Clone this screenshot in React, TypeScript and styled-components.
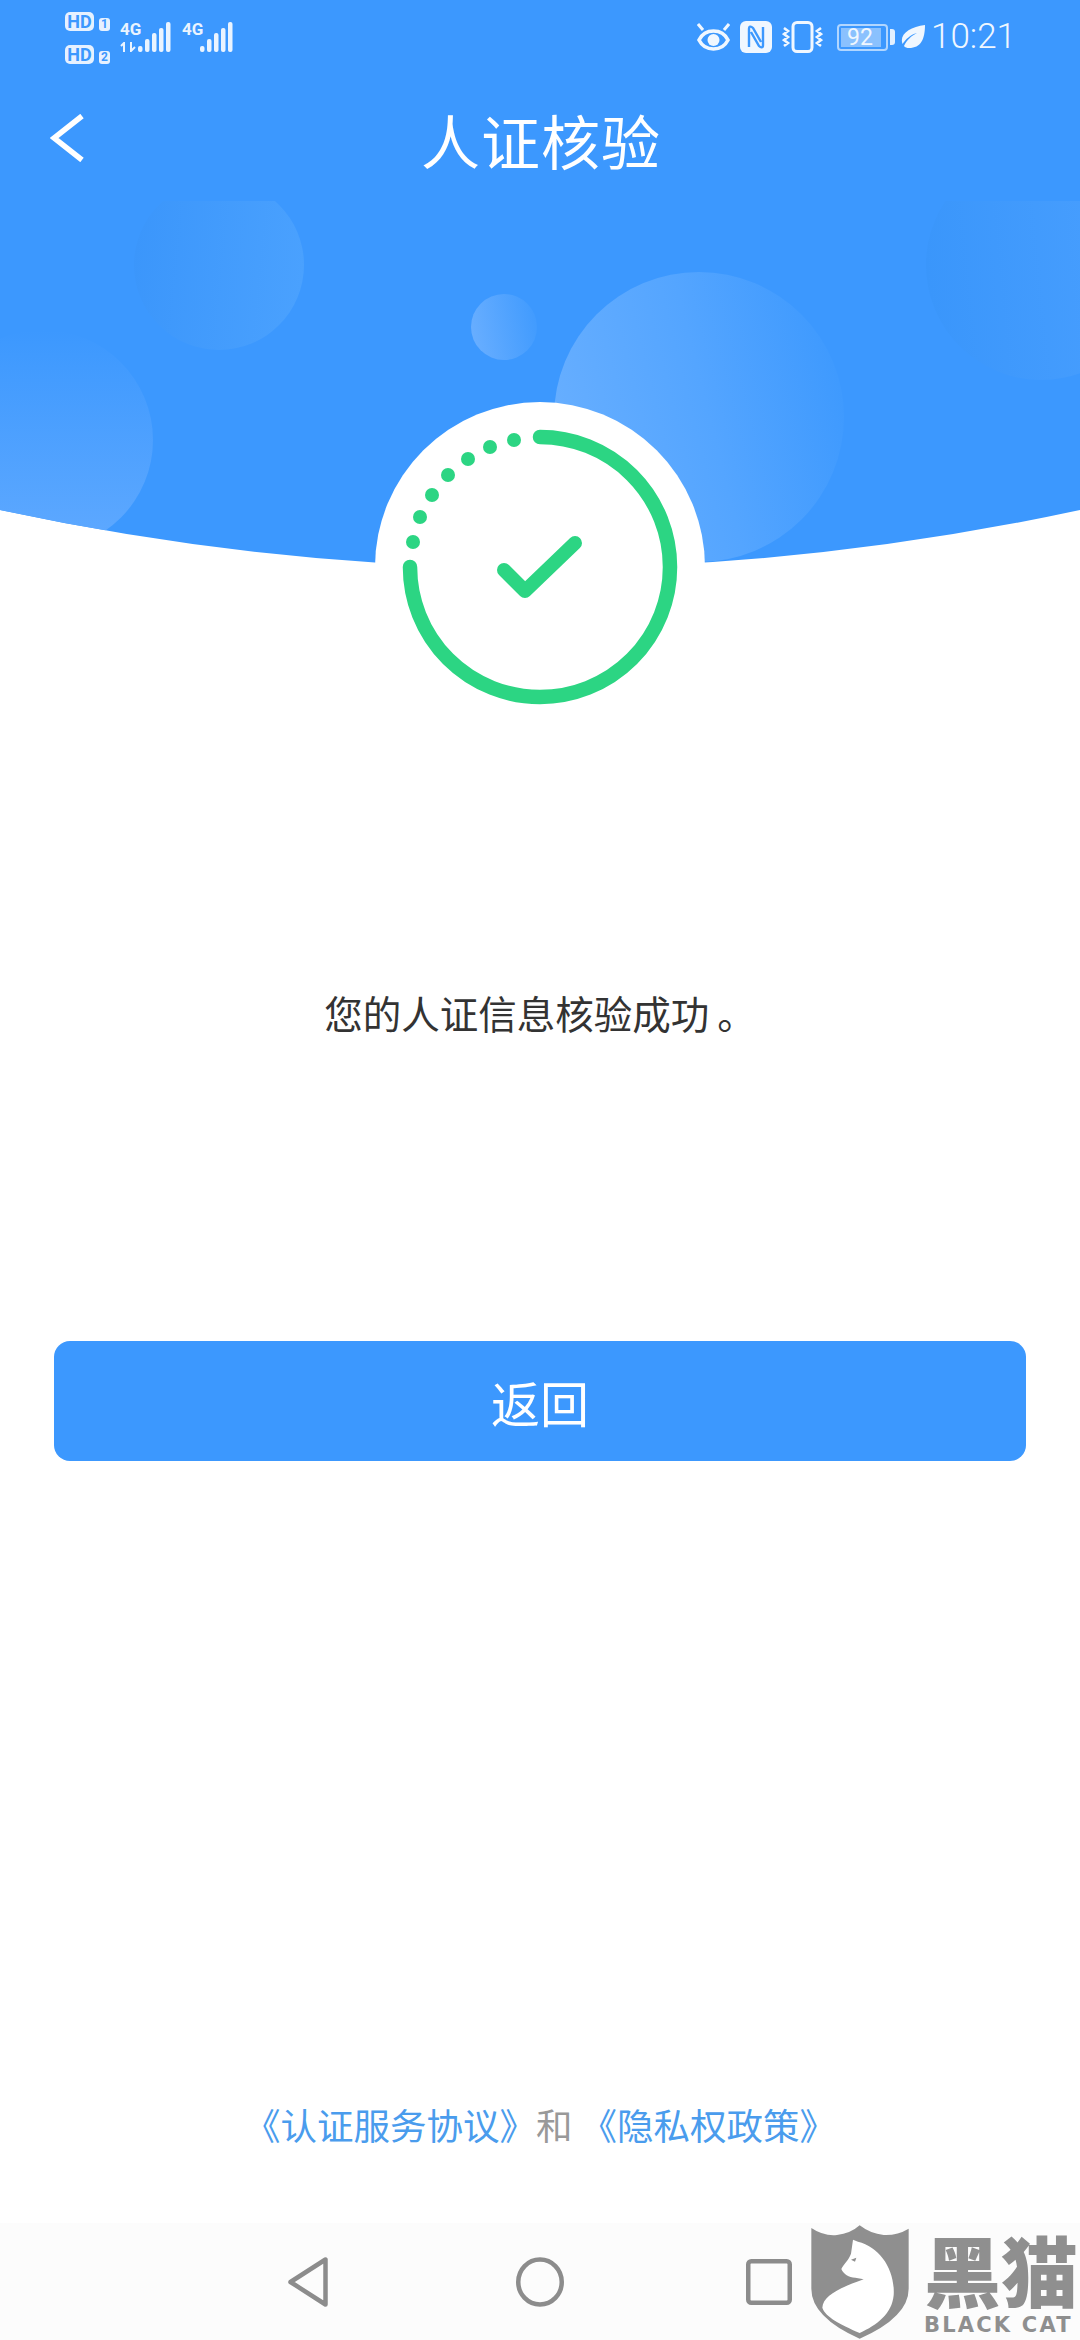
import React from "react";
import styled, { createGlobalStyle } from "styled-components";

const BLUE = "#3c98fe";
const GREEN = "#2cd583";
const GREY = "#8c8c8c";
const CJK = `"Noto Sans CJK SC", "Noto Sans", sans-serif`;

const ringDots = [
    [514, 440],
    [490, 447],
    [468, 459],
    [448, 475],
    [432, 495],
    [420, 517],
    [413, 542],
];

const GlobalStyle = createGlobalStyle`
    html, body {
        margin: 0;
        padding: 0;
        background: #fff;
    }
    * {
        box-sizing: border-box;
    }
`;

const Backdrop = () => (
    <BackdropSvg viewBox="0 0 1080 570">
        <defs>
            <clipPath id="heroClip">
                <path d="M0 201H1080V510Q540 626 0 510Z" />
            </clipPath>
            <linearGradient id="bigBubble" x1="0" y1="0.7" x2="1" y2="0.45">
                <stop offset="0" stopColor="#68afff" />
                <stop offset="0.55" stopColor="#54a5ff" />
                <stop offset="1" stopColor="#3f9afe" />
            </linearGradient>
            <linearGradient id="smallBubble" x1="0" y1="0.6" x2="1" y2="0.4">
                <stop offset="0" stopColor="#68aeff" />
                <stop offset="1" stopColor="#419bfe" />
            </linearGradient>
            <linearGradient id="leftBubble" x1="0.5" y1="0" x2="0.5" y2="1">
                <stop offset="0" stopColor="#3c98fe" />
                <stop offset="1" stopColor="#5fa9ff" />
            </linearGradient>
            <linearGradient id="topBubble" x1="0" y1="0.4" x2="1" y2="0.5">
                <stop offset="0" stopColor="#3b96fb" />
                <stop offset="1" stopColor="#4aa1fe" />
            </linearGradient>
            <linearGradient id="rightBubble" x1="0" y1="0.5" x2="1" y2="0.4">
                <stop offset="0" stopColor="#3a96fb" />
                <stop offset="0.8" stopColor="#479efe" />
            </linearGradient>
        </defs>
        <rect width="1080" height="570" fill="#fff" />
        <path d="M0 0H1080V510Q540 626 0 510Z" fill={BLUE} />
        <g clipPath="url(#heroClip)">
            <circle cx="219" cy="265" r="85" fill="url(#topBubble)" />
            <circle cx="1041" cy="265" r="115" fill="url(#rightBubble)" />
            <circle cx="43" cy="440" r="110" fill="url(#leftBubble)" />
            <circle cx="504" cy="327" r="33" fill="url(#smallBubble)" />
            <circle cx="699" cy="417" r="145" fill="url(#bigBubble)" />
        </g>
    </BackdropSvg>
);

const Signal = ({ arrows }: { arrows?: boolean }) => (
    <SignalBox>
        <SignalLabel>
            <NetworkText>4G</NetworkText>
            {arrows && (
                <svg width="18" height="10" viewBox="0 0 18 10">
                    <path
                        d="M4 10V1L1 4M11 0v9l4-4"
                        fill="none"
                        stroke="#eaf4ff"
                        strokeWidth="2"
                    />
                </svg>
            )}
        </SignalLabel>
        <svg width="34" height="30" viewBox="0 0 34 30">
            {[6, 13, 19, 24, 30].map((h, i) => (
                <rect
                    key={h}
                    x={i * 7}
                    y={30 - h}
                    width="4.5"
                    height={h}
                    rx="2"
                    fill="#eaf4ff"
                />
            ))}
        </svg>
    </SignalBox>
);

const StatusBarView = () => (
    <StatusBar>
        <StatusGroup>
            <SimColumn>
                <SimRow>
                    <HdBadge>HD</HdBadge>
                    <SimDigit>1</SimDigit>
                </SimRow>
                <SimRow>
                    <HdBadge>HD</HdBadge>
                    <SimDigit>2</SimDigit>
                </SimRow>
            </SimColumn>
            <Signal arrows />
            <Signal />
        </StatusGroup>
        <StatusIcons>
            <svg width="33" height="30" viewBox="0 0 33 30">
                <path
                    d="M2 18C8 6 25 6 31 18C25 30 8 30 2 18Z"
                    fill="none"
                    stroke="#f0f7ff"
                    strokeWidth="3.6"
                />
                <circle cx="16.5" cy="18" r="6" fill="#f0f7ff" />
                <path
                    d="M1 2l5 6M32 2l-5 6"
                    fill="none"
                    stroke="#f0f7ff"
                    strokeWidth="3"
                />
            </svg>
            <svg width="32" height="32" viewBox="0 0 32 32">
                <rect width="32" height="32" rx="6" fill="#f0f7ff" />
                <path
                    d="M9 26V8c0-3 2-3 4-1l8 14M23 6v18c0 3-2 3-4 1l-8-14"
                    fill="none"
                    stroke={BLUE}
                    strokeWidth="2.4"
                />
            </svg>
            <svg width="41" height="32" viewBox="0 0 41 32">
                <rect
                    x="11"
                    y="1.5"
                    width="19"
                    height="29"
                    rx="4"
                    fill="none"
                    stroke="#f0f7ff"
                    strokeWidth="3"
                />
                <path
                    d="M2 7l4 3-4 3 4 3-4 3 4 3-4 3M39 7l-4 3 4 3-4 3 4 3-4 3 4 3"
                    fill="none"
                    stroke="#f0f7ff"
                    strokeWidth="2.6"
                />
            </svg>
            <Battery>
                <BatteryCase>
                    <BatteryLevel>92</BatteryLevel>
                </BatteryCase>
                <BatteryNub />
            </Battery>
            <Leaf width="24" height="24" viewBox="0 0 24 24">
                <path
                    d="M24 0C24 14 20 23 8 23C6 23 4 22.500 3 21C6 15 10 11 16 8C9 10 5 14 1.500 19C-2 9 9 2 24 0Z"
                    fill="#f0f7ff"
                />
            </Leaf>
            <Clock>10:21</Clock>
        </StatusIcons>
    </StatusBar>
);

const CatLogo = () => (
    <svg width="98" height="114" viewBox="92 74 294 342">
        <path
            d="M93 83Q130 108 170 104Q210 100 238 75Q270 100 310 104Q350 106 385 85V265Q385 350 238 415Q93 350 93 265Z"
            fill="#8f8f8f"
        />
        <path
            d="M218 118L233 124C300 140 345 210 340 285C335 340 290 375 238 398C180 372 135 350 126 322C128 285 180 262 250 237L225 232C205 232 190 222 183 206C190 190 205 180 212 160Z"
            fill="#fff"
        />
        <path d="M212 178L228 172L224 184Z" fill="#8f8f8f" />
    </svg>
);

export default function App() {
    return (
        <Page>
            <GlobalStyle />
            <Backdrop />
            <Hero>
                <StatusBarView />
                <TopBar>
                    <BackButton>
                        <svg width="34" height="48" viewBox="0 0 34 48">
                            <path
                                d="M32 2L4 24L32 46"
                                fill="none"
                                stroke="#fff"
                                strokeWidth="5.5"
                            />
                        </svg>
                    </BackButton>
                    <Title>人证核验</Title>
                </TopBar>
            </Hero>
            <Badge>
                <svg width="330" height="330" viewBox="375 402 330 330">
                    <path
                        d="M540 437A130 130 0 1 1 410 567"
                        fill="none"
                        stroke={GREEN}
                        strokeWidth="14.5"
                        strokeLinecap="round"
                    />
                    {ringDots.map(([x, y]) => (
                        <circle key={x} cx={x} cy={y} r="7" fill={GREEN} />
                    ))}
                    <path
                        d="M504 570L525 591L575 543"
                        fill="none"
                        stroke={GREEN}
                        strokeWidth="14"
                        strokeLinecap="round"
                        strokeLinejoin="round"
                    />
                </svg>
            </Badge>
            <Message>
                您的人证信息核验成功<MessageStop>。</MessageStop>
            </Message>
            <ReturnButton>返回</ReturnButton>
            <Agreement>
                <AgreementLink>《认证服务协议》</AgreementLink>和{" "}
                <AgreementLink>《隐私权政策》</AgreementLink>
            </Agreement>
            <SystemNav>
                <svg width="46" height="50" viewBox="0 0 46 50">
                    <path
                        d="M37.500 2.500V47.500L2.500 25Z"
                        fill="none"
                        stroke={GREY}
                        strokeWidth="4.500"
                        strokeLinejoin="round"
                    />
                </svg>
                <svg width="48" height="50" viewBox="0 0 48 50">
                    <ellipse
                        cx="24"
                        cy="25"
                        rx="21.750"
                        ry="22.500"
                        fill="none"
                        stroke={GREY}
                        strokeWidth="4.500"
                    />
                </svg>
                <svg width="46" height="46" viewBox="0 0 46 46">
                    <rect
                        x="2.250"
                        y="2.250"
                        width="41.500"
                        height="41.500"
                        rx="3"
                        fill="none"
                        stroke={GREY}
                        strokeWidth="4.500"
                    />
                </svg>
            </SystemNav>
            <Watermark>
                <CatLogo />
                <WatermarkText>
                    <WatermarkTitle>黑猫</WatermarkTitle>
                    <WatermarkSub>BLACK CAT</WatermarkSub>
                </WatermarkText>
            </Watermark>
        </Page>
    );
}

const Page = styled.div`
    position: relative;
    width: 1080px;
    height: 2340px;
    overflow: hidden;
    display: flex;
    flex-direction: column;
    align-items: center;
    background: #fff;
    font-family: ${CJK};
`;

const BackdropSvg = styled.svg`
    position: absolute;
    top: 0;
    left: 0;
    width: 1080px;
    height: 570px;
`;

const Hero = styled.header`
    position: relative;
    width: 100%;
    height: 402px;
    color: #fff;
`;

const StatusBar = styled.div`
    height: 80px;
    padding: 11px 64px 0 65px;
    display: flex;
    justify-content: space-between;
    align-items: flex-start;
`;

const StatusGroup = styled.div`
    display: flex;
    align-items: flex-start;
    gap: 10px;
`;

const SimColumn = styled.div`
    display: flex;
    flex-direction: column;
    gap: 13px;
`;

const SimRow = styled.div`
    display: flex;
    align-items: flex-end;
    gap: 5px;
    height: 20px;
`;

const HdBadge = styled.span`
    width: 29px;
    height: 19px;
    border-radius: 5px;
    background: #e6f1ff;
    color: ${BLUE};
    font: 700 18px/19px "Liberation Sans Narrow", "Roboto", sans-serif;
    text-align: center;
`;

const SimDigit = styled.span`
    width: 11px;
    height: 13px;
    border-radius: 3px;
    background: #e6f1ff;
    color: ${BLUE};
    font: 700 12px/13px "Roboto", sans-serif;
    text-align: center;
`;

const SignalBox = styled.div`
    display: flex;
    align-items: flex-start;
    height: 42px;
    padding-top: 11px;
`;

const SignalLabel = styled.div`
    width: 18px;
    display: flex;
    flex-direction: column;
    gap: 6px;
`;

const NetworkText = styled.span`
    color: #eaf4ff;
    font: 700 17px/14px "Liberation Sans Narrow", "Roboto", sans-serif;
`;

const StatusIcons = styled.div`
    display: flex;
    align-items: center;
    gap: 10px;
    height: 42px;
    padding-top: 10px;
`;

const Battery = styled.div`
    display: flex;
    align-items: center;
    gap: 2px;
    margin-left: 4px;
`;

const BatteryCase = styled.div`
    width: 51px;
    height: 27px;
    padding: 2px;
    border: 2px solid rgba(255, 255, 255, 0.6);
    border-radius: 4px;
`;

const BatteryLevel = styled.div`
    width: 40px;
    height: 100%;
    background: rgba(255, 255, 255, 0.4);
    color: #f0f7ff;
    font: 400 23px/19px "Roboto", sans-serif;
    padding-left: 6px;
    white-space: nowrap;
`;

const BatteryNub = styled.div`
    width: 5px;
    height: 16px;
    border-radius: 0 3px 3px 0;
    background: rgba(255, 255, 255, 0.85);
`;

const Leaf = styled.svg`
    margin-left: -4px;
`;

const Clock = styled.span`
    margin-left: -4px;
    color: #f0f7ff;
    font: 300 35px/40px "Roboto", sans-serif;
`;

const TopBar = styled.div`
    position: relative;
    height: 120px;
    display: flex;
    align-items: center;
    justify-content: center;
`;

const BackButton = styled.div`
    position: absolute;
    left: 50px;
    top: 34px;
    display: flex;
`;

const Title = styled.h1`
    margin: 0 0 0 2px;
    font-size: 59px;
    font-weight: 400;
    line-height: 80px;
    letter-spacing: 1px;
`;

const Badge = styled.div`
    position: relative;
    width: 330px;
    height: 330px;
    border-radius: 50%;
    background: #fff;
    display: flex;
`;

const Message = styled.p`
    position: relative;
    margin: 250px 0 0;
    color: #333;
    font-size: 38.500px;
    line-height: 60px;
`;

const MessageStop = styled.span`
    margin-left: 8px;
`;

const ReturnButton = styled.button`
    position: relative;
    width: 972px;
    height: 120px;
    margin-top: 299px;
    border: none;
    border-radius: 16px;
    background: ${BLUE};
    color: #fff;
    font-family: ${CJK};
    font-size: 49px;
`;

const Agreement = styled.div`
    position: relative;
    margin-top: auto;
    margin-bottom: 73px;
    color: #999;
    font-size: 36.500px;
    line-height: 50px;
    white-space: pre-wrap;
`;

const AgreementLink = styled.span`
    color: #4a9ced;
`;

const SystemNav = styled.nav`
    width: 100%;
    height: 117px;
    padding: 0 288px;
    background: #fcfcfc;
    display: flex;
    align-items: center;
    justify-content: space-between;
`;

const Watermark = styled.div`
    position: absolute;
    left: 811px;
    top: 2225px;
    display: flex;
    gap: 15px;
    color: #8f8f8f;
`;

const WatermarkText = styled.div`
    display: flex;
    flex-direction: column;
    width: 154px;
    padding-top: 6px;
`;

const WatermarkTitle = styled.span`
    font-size: 77px;
    font-weight: 900;
    line-height: 76px;
`;

const WatermarkSub = styled.span`
    margin-top: 8px;
    font: 700 21px/20px "DejaVu Sans", sans-serif;
    letter-spacing: 2.200px;
    white-space: nowrap;
`;
